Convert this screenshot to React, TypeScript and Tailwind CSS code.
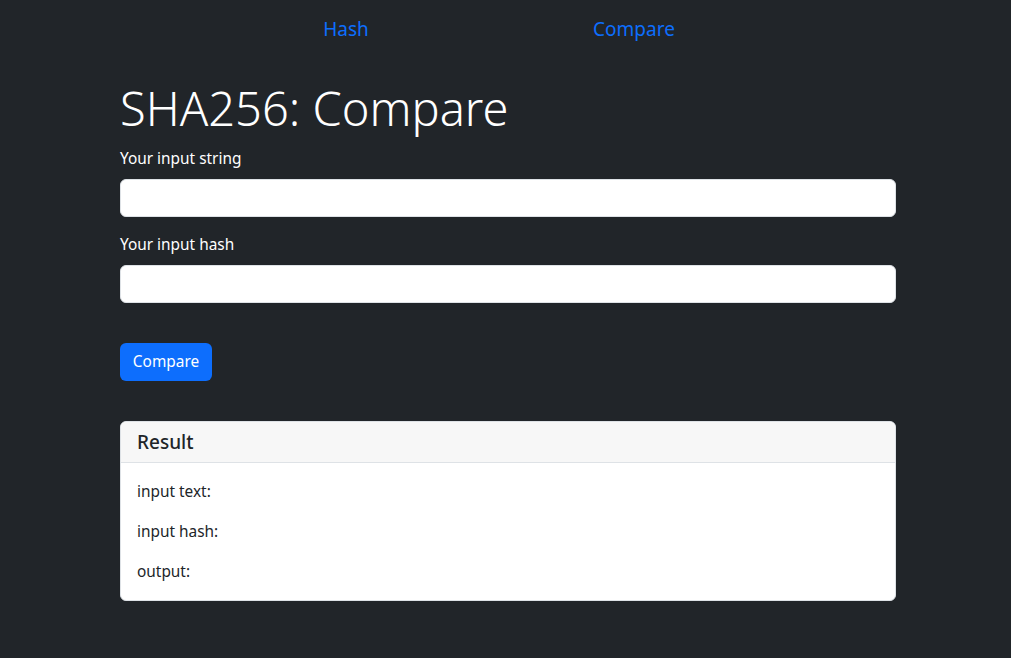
import React from "react";

const font = { fontFamily: '"Noto Sans", "Open Sans", sans-serif' };

export default function App() {
  return (
    <div
      className="min-h-[658px] w-full bg-[#212529] text-white"
      style={font}
    >
      <nav className="flex h-[58px] items-start pt-[14px]">
        <div className="ml-[246px] flex w-[200px] justify-center">
          <a href="#" className="text-[19px] leading-[30px] text-[#0d6efd]">
            Hash
          </a>
        </div>
        <div className="ml-[88px] flex w-[200px] justify-center">
          <a href="#" className="text-[19px] leading-[30px] text-[#0d6efd]">
            Compare
          </a>
        </div>
      </nav>

      <main className="ml-[120px] w-[776px] pt-[20px]">
        <h1 className="mb-2 text-[47px] font-light leading-[61px]">
          SHA256: Compare
        </h1>

        <div className="mb-4">
          <label className="mb-2 block text-[15.4px] leading-6">
            Your input string
          </label>
          <input
            type="text"
            className="block h-[38px] w-full rounded-md border border-[#dee2e6] bg-white px-3 text-[#212529]"
          />
        </div>

        <div className="mb-[40px]">
          <label className="mb-2 block text-[15.4px] leading-6">
            Your input hash
          </label>
          <input
            type="text"
            className="block h-[38px] w-full rounded-md border border-[#dee2e6] bg-white px-3 text-[#212529]"
          />
        </div>

        <button className="h-[38px] w-[92px] rounded-md bg-[#0d6efd] text-[15.4px] text-white">
          Compare
        </button>

        <div className="mt-[40px] overflow-hidden rounded-md border border-[#dee2e6] bg-white text-[#212529]">
          <div className="border-b border-[#dee2e6] bg-[#f7f7f7] px-4 py-2">
            <h5 className="text-[19px] font-medium leading-6">Result</h5>
          </div>
          <div className="px-4 pb-4 pt-[17px] text-[15.4px] leading-6">
            <p className="mb-4">input text:</p>
            <p className="mb-4">input hash:</p>
            <p>output:</p>
          </div>
        </div>
      </main>
    </div>
  );
}
